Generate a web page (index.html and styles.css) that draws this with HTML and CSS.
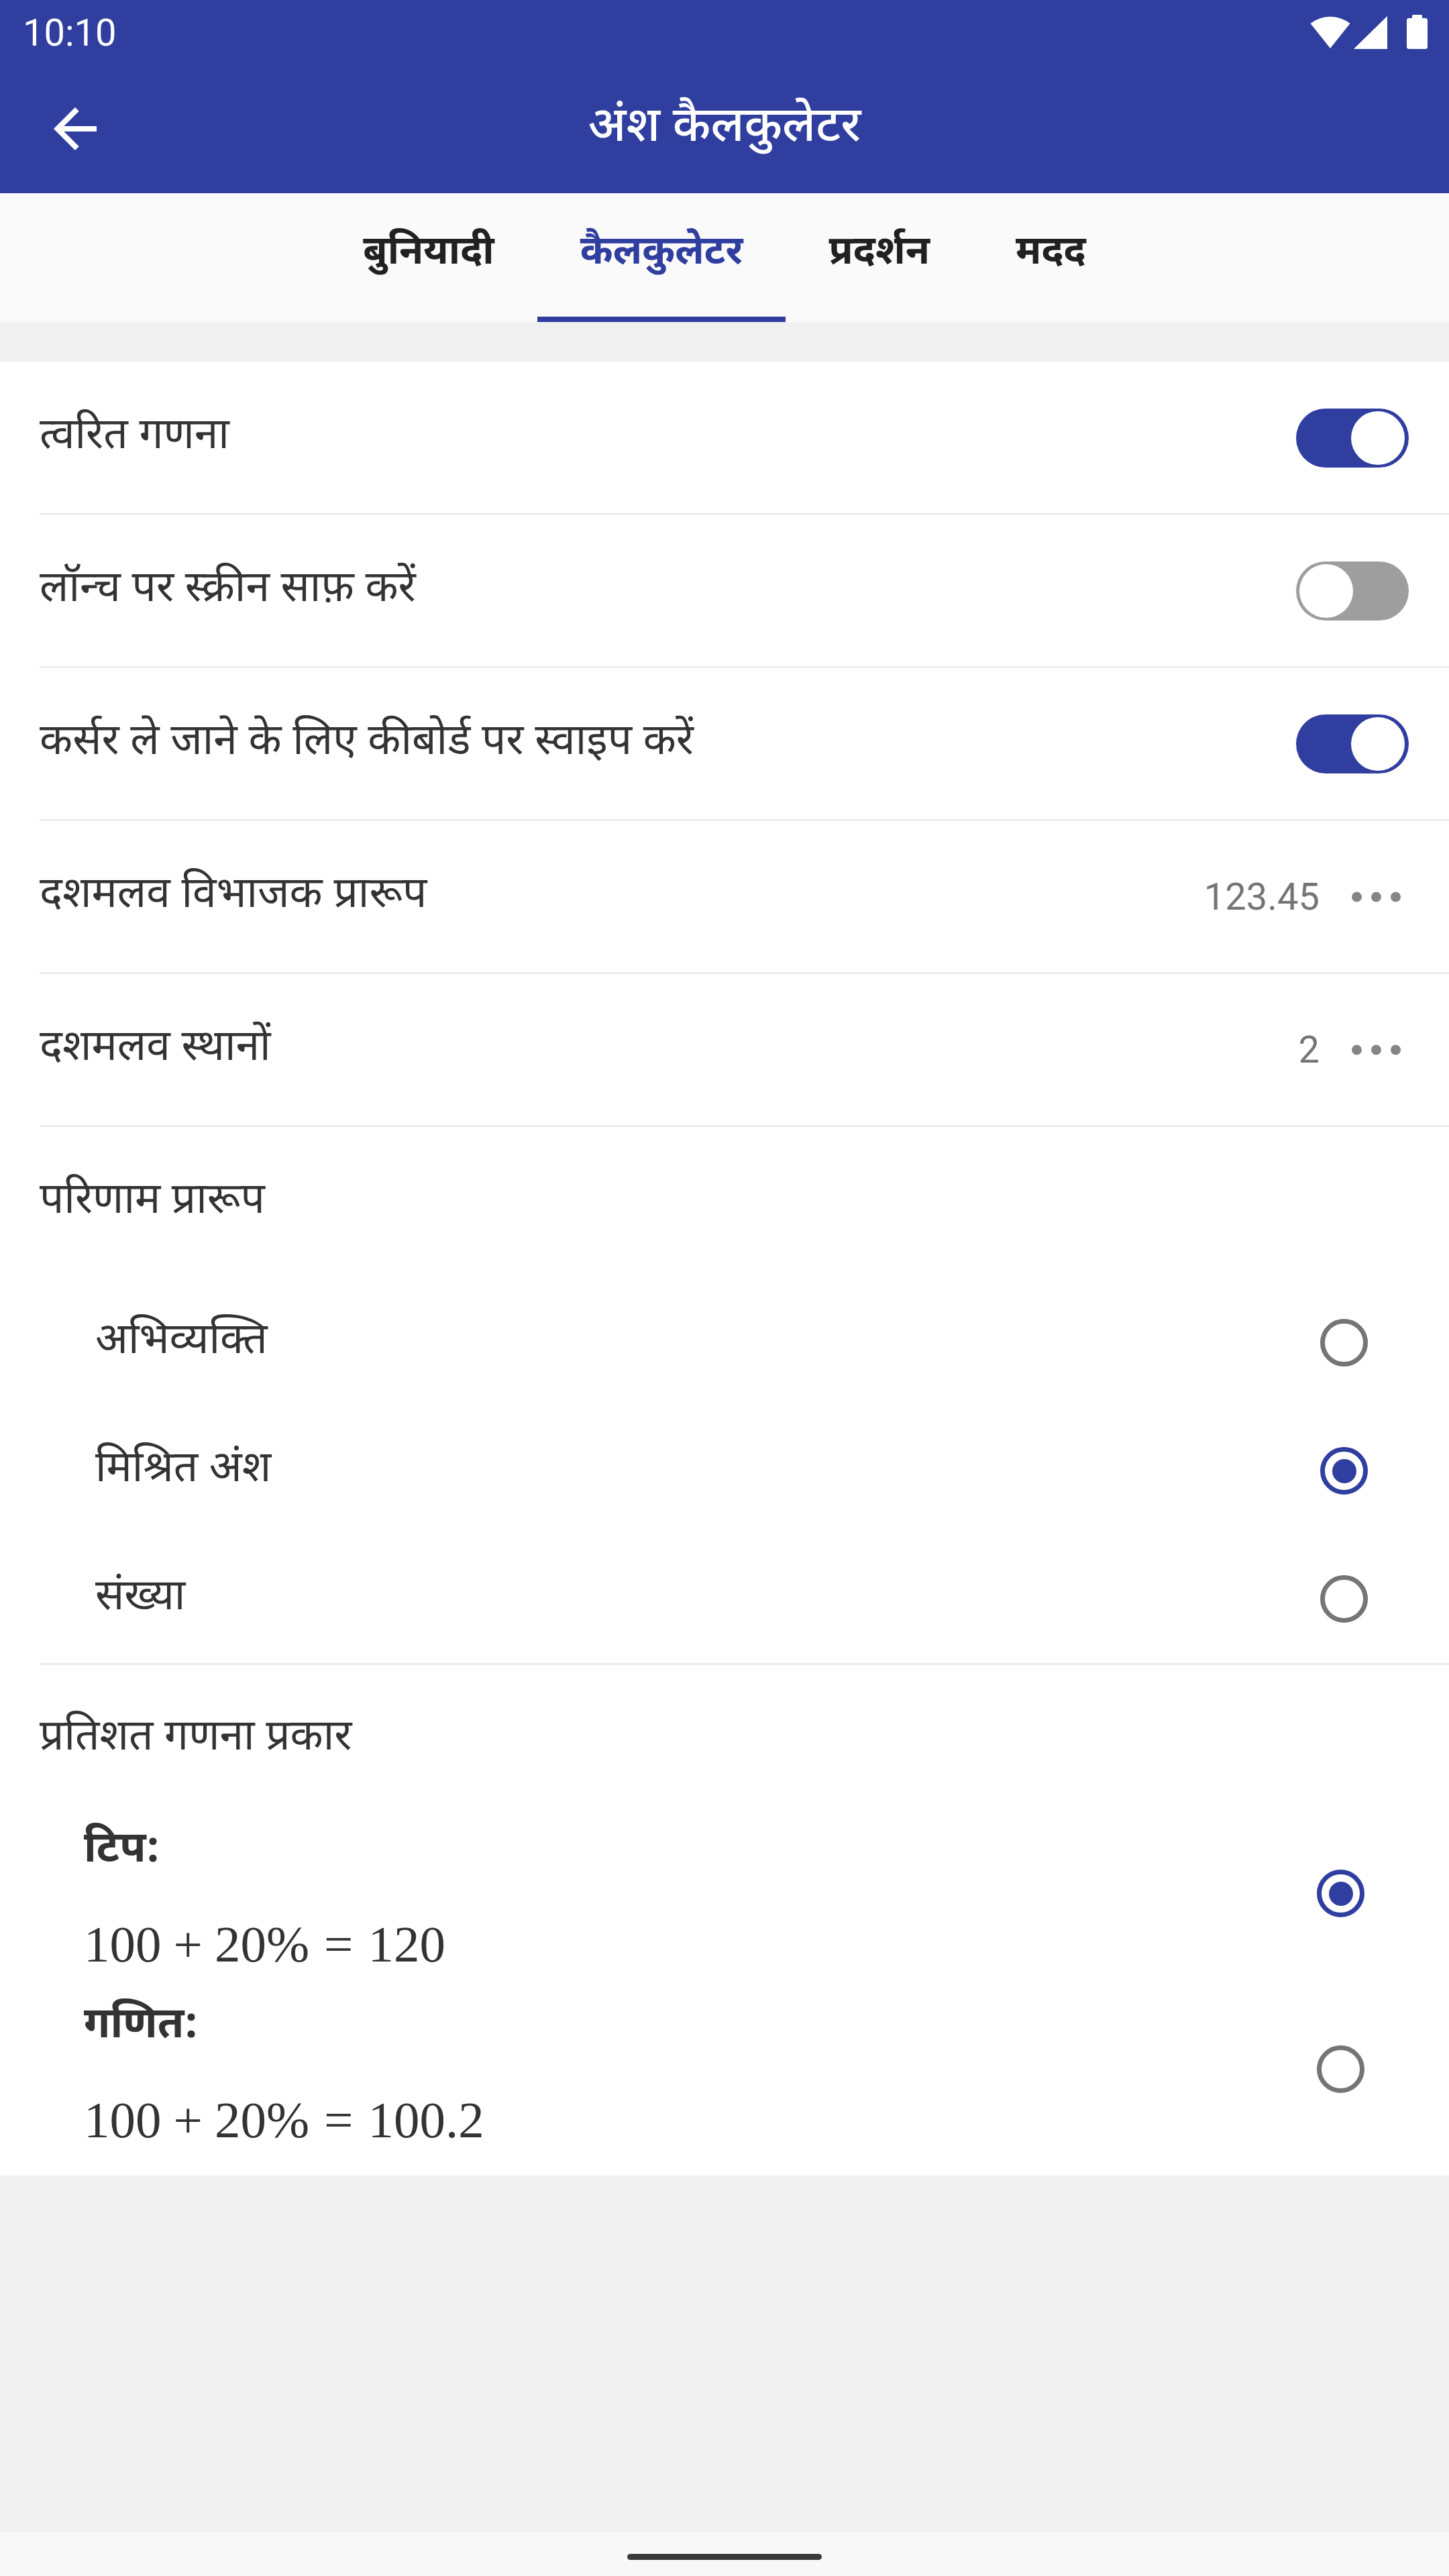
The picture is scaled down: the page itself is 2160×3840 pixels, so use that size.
FILE: index.html
```html
<!DOCTYPE html>
<html lang="hi">
<head>
<meta charset="utf-8">
<title>अंश कैलकुलेटर</title>
<link rel="stylesheet" href="styles.css">
</head>
<body>
<header class="appbar">
  <div class="statusbar">
    <span class="time">10:10</span>
    <div class="status-icons">
      <svg class="ic-wifi" width="60" height="50" viewBox="0 0 60 50"><path d="M30 49 L0.5 12 A47.6 47.6 0 0 1 59.5 12 Z" fill="#fff"/></svg>
      <svg class="ic-signal" width="50" height="49" viewBox="0 0 50 49"><path d="M50 0 V49 H0 Z" fill="#fff"/></svg>
      <svg class="ic-battery" width="31" height="51" viewBox="0 0 31 51"><rect x="8" y="0" width="15" height="7" rx="1.5" fill="#fff"/><rect x="0" y="5" width="31" height="46" rx="3.5" fill="#fff"/></svg>
    </div>
  </div>
  <div class="toolbar">
    <div class="nav-btn">
      <svg width="96" height="96" viewBox="0 0 24 24"><path d="M20 11H7.830l5.59-5.59L12 4l-8 8 8 8 1.41-1.41L7.83 13H20v-2z" fill="#fff"/></svg>
    </div>
    <h1 class="title">अंश कैलकुलेटर</h1>
    <div></div>
  </div>
</header>

<nav class="tabs">
  <div class="tab">बुनियादी</div>
  <div class="tab active">कैलकुलेटर</div>
  <div class="tab">प्रदर्शन</div>
  <div class="tab">मदद</div>
</nav>

<div class="gap"></div>

<main class="card">
  <div class="row">
    <span class="label">त्वरित गणना</span>
    <span class="switch on"><span class="thumb"></span></span>
  </div>
  <div class="row">
    <span class="label">लॉन्च पर स्क्रीन साफ़ करें</span>
    <span class="switch off"><span class="thumb"></span></span>
  </div>
  <div class="row">
    <span class="label">कर्सर ले जाने के लिए कीबोर्ड पर स्वाइप करें</span>
    <span class="switch on"><span class="thumb"></span></span>
  </div>
  <div class="row row-value">
    <span class="label">दशमलव विभाजक प्रारूप</span>
    <span class="value">123.45</span>
    <svg class="more" width="74" height="16" viewBox="0 0 74 16"><circle cx="7.5" cy="8" r="7.5"/><circle cx="36.5" cy="8" r="7.5"/><circle cx="65.5" cy="8" r="7.5"/></svg>
  </div>
  <div class="row row-value">
    <span class="label">दशमलव स्थानों</span>
    <span class="value">2</span>
    <svg class="more" width="74" height="16" viewBox="0 0 74 16"><circle cx="7.5" cy="8" r="7.5"/><circle cx="36.5" cy="8" r="7.5"/><circle cx="65.5" cy="8" r="7.5"/></svg>
  </div>

  <section class="group group-result">
    <div class="group-title">परिणाम प्रारूप</div>
    <div class="option">
      <span class="opt-label">अभिव्यक्ति</span>
      <span class="radio"></span>
    </div>
    <div class="option">
      <span class="opt-label">मिश्रित अंश</span>
      <span class="radio checked"></span>
    </div>
    <div class="option">
      <span class="opt-label">संख्या</span>
      <span class="radio"></span>
    </div>
  </section>

  <section class="group group-percent">
    <div class="group-title">प्रतिशत गणना प्रकार</div>
    <div class="pct-option">
      <div class="pct-text">
        <div class="pct-name">टिप:</div>
        <div class="formula">100<span class="bin">+</span>20%<span class="rel">=</span>120</div>
      </div>
      <span class="radio checked"></span>
    </div>
    <div class="pct-option">
      <div class="pct-text">
        <div class="pct-name">गणित:</div>
        <div class="formula">100<span class="bin">+</span>20%<span class="rel">=</span>100.2</div>
      </div>
      <span class="radio"></span>
    </div>
  </section>
</main>

<div class="filler"></div>

<footer class="navbar">
  <span class="pill"></span>
</footer>
</body>
</html>
```

FILE: styles.css
```css
* { box-sizing: border-box; }

html, body {
  margin: 0;
  padding: 0;
}

body {
  width: 2160px;
  min-height: 3840px;
  background: #f1f1f1;
  display: flex;
  flex-direction: column;
  font-family: "Noto Sans Devanagari", "Noto Sans", Roboto, sans-serif;
  color: #333333;
}

.appbar {
  background: #303f9f;
  height: 288px;
  color: #ffffff;
}

.statusbar {
  height: 96px;
  display: flex;
  align-items: center;
  justify-content: space-between;
  padding: 0 32px 0 34px;
}

.time {
  font-family: Roboto, "Noto Sans", sans-serif;
  font-size: 56px;
  line-height: 1;
  margin-top: 2px;
}

.status-icons {
  display: flex;
  align-items: flex-end;
  height: 96px;
  padding-bottom: 23px;
}

.ic-wifi { display: block; margin-right: 5px; }
.ic-signal { display: block; margin-right: 29px; }
.ic-battery { display: block; }

.toolbar {
  height: 192px;
  display: grid;
  grid-template-columns: 1fr auto 1fr;
  align-items: center;
}

.nav-btn {
  padding-left: 64px;
  display: flex;
  align-items: center;
}

.nav-btn svg { display: block; }

.title {
  margin: 0;
  font-size: 72px;
  font-weight: 500;
  line-height: 1;
  color: #ffffff;
  white-space: nowrap;
}

.tabs {
  height: 192px;
  background: #fafafa;
  display: flex;
  justify-content: center;
}

.tab {
  padding: 0 64px 4px;
  display: flex;
  align-items: center;
  font-size: 59px;
  font-weight: 700;
  color: #212121;
  border-bottom: 8px solid transparent;
}

.tab.active {
  color: #303f9f;
  border-bottom-color: #303f9f;
}

.gap {
  height: 60px;
}

.card {
  background: #ffffff;
  padding-bottom: 15px;
}

.row {
  height: 228px;
  margin-left: 59px;
  padding-right: 60px;
  border-bottom: 3px solid #eeeeee;
  display: flex;
  align-items: center;
}

.label {
  flex: 1;
  font-size: 64px;
  line-height: 1;
  white-space: nowrap;
}

.switch {
  position: relative;
  width: 168px;
  height: 88px;
  border-radius: 44px;
  flex-shrink: 0;
}

.switch.on { background: #303f9f; }
.switch.off { background: #9e9e9e; }

.thumb {
  position: absolute;
  top: 4px;
  width: 80px;
  height: 80px;
  border-radius: 50%;
  background: #ffffff;
}

.switch.on .thumb { right: 6px; }
.switch.off .thumb { left: 5px; }

.row-value {
  padding-right: 71px;
}

.value {
  font-family: Roboto, "Noto Sans", sans-serif;
  font-size: 56px;
  color: #757575;
  line-height: 1;
  margin-right: 48px;
}

.more {
  display: block;
  fill: #858585;
}

.group {
  margin-left: 59px;
}

.group-result {
  border-bottom: 3px solid #eeeeee;
}

.group-title {
  display: flex;
  align-items: center;
  font-size: 64px;
  line-height: 1;
}

.group-result .group-title { height: 226px; }
.group-percent .group-title { height: 222px; }

.option {
  height: 191px;
  display: flex;
  align-items: center;
  padding-left: 83px;
  padding-right: 121px;
}

.opt-label {
  flex: 1;
  font-size: 64px;
  line-height: 1;
}

.radio {
  width: 71px;
  height: 71px;
  border-radius: 50%;
  border: 7px solid #757575;
  flex-shrink: 0;
  display: flex;
  align-items: center;
  justify-content: center;
}

.radio.checked {
  border-color: #303f9f;
}

.radio.checked::after {
  content: "";
  width: 36px;
  height: 36px;
  border-radius: 50%;
  background: #303f9f;
}

.pct-option {
  height: 262px;
  display: flex;
  align-items: flex-start;
  padding-left: 66px;
  padding-right: 126px;
}

.pct-text {
  flex: 1;
}

.pct-name {
  font-size: 64px;
  font-weight: 700;
  line-height: 112px;
}

.formula {
  font-family: "Liberation Serif", "Times New Roman", serif;
  font-size: 77px;
  line-height: 132px;
  padding-top: 16px;
  white-space: nowrap;
}

.bin { margin: 0 18px; }
.rel { margin: 0 22px; }

.pct-option .radio {
  margin-top: 83px;
}

.filler {
  flex: 1;
}

.navbar {
  height: 66px;
  background: #f8f8f8;
  display: flex;
  justify-content: center;
  align-items: flex-start;
  padding-top: 33px;
}

.pill {
  width: 290px;
  height: 9px;
  border-radius: 5px;
  background: #3a3a3a;
}
```
